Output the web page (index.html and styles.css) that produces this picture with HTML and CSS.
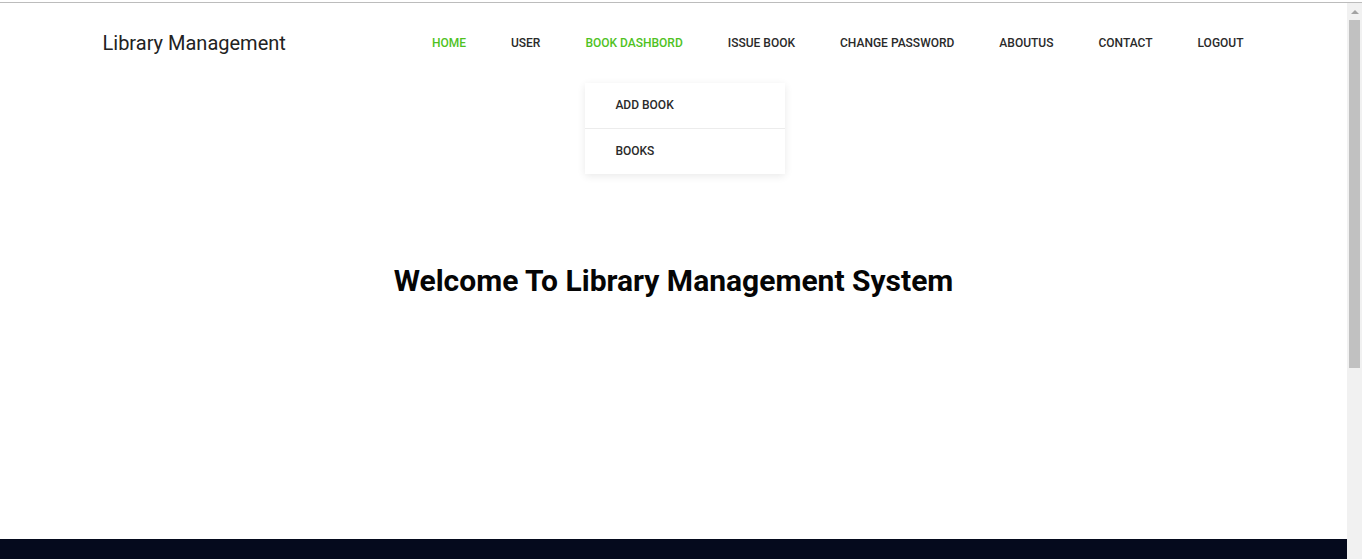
FILE: index.html
```html
<!DOCTYPE html>
<html lang="en">
<head>
<meta charset="utf-8">
<title>Library Management</title>
<link rel="stylesheet" href="styles.css">
</head>
<body>
<div class="topline"></div>
<div class="frame">
  <div class="page">
    <header class="header">
      <div class="container header-inner">
        <a class="logo" href="#">Library Management</a>
        <nav>
          <ul class="menu">
            <li class="active"><a href="#">HOME</a></li>
            <li><a href="#">USER</a></li>
            <li class="active has-drop"><a href="#">BOOK DASHBORD</a>
              <ul class="dropdown">
                <li><a href="#">ADD BOOK</a></li>
                <li><a href="#">BOOKS</a></li>
              </ul>
            </li>
            <li><a href="#">ISSUE BOOK</a></li>
            <li><a href="#">CHANGE PASSWORD</a></li>
            <li><a href="#">ABOUTUS</a></li>
            <li><a href="#">CONTACT</a></li>
            <li><a href="#">LOGOUT</a></li>
          </ul>
        </nav>
      </div>
    </header>
    <section class="hero">
      <h1>Welcome To Library Management System</h1>
    </section>
    <footer class="footer"></footer>
  </div>
  <div class="scrollbar">
    <div class="sb-btn"><span class="sb-arrow"></span></div>
    <div class="sb-thumb"></div>
  </div>
</div>
</body>
</html>
```

FILE: styles.css
```css
* { box-sizing: border-box; }
html, body { margin: 0; padding: 0; height: 100%; overflow: hidden; }
body {
  font-family: Roboto, "Noto Sans", "Liberation Sans", sans-serif;
  background: #fff;
  color: #1c1c1c;
}
a { text-decoration: none; color: inherit; }
ul { list-style: none; margin: 0; padding: 0; }

.topline {
  height: 3px;
  border-bottom: 1px solid #bcbcbc;
  background: #fff;
}
.frame {
  display: flex;
  height: 556px;
}
.page {
  flex: 1;
  display: flex;
  flex-direction: column;
  overflow: hidden;
}
.container {
  width: 1170px;
  padding: 0 15px;
  margin: 0 auto;
}
.header { height: 80px; position: relative; z-index: 5; }
.header-inner {
  height: 100%;
  display: flex;
  align-items: center;
  justify-content: space-between;
}
.logo {
  font-size: 20px;
  color: #222;
  padding-bottom: 1px;
  margin-left: -1px;
}
nav { height: 100%; }
.menu {
  display: flex;
  height: 100%;
  gap: 45px;
}
.menu > li {
  position: relative;
  display: flex;
  align-items: center;
}
.menu > li > a {
  font-size: 12px;
  font-weight: 500;
  color: #2a2a2a;
}
.menu > li.active > a { color: #4fc21f; }

.dropdown {
  position: absolute;
  top: 100%;
  left: 0;
  width: 200px;
  background: #fff;
  box-shadow: 0 2px 8px rgba(0, 0, 0, 0.09);
}
.dropdown li + li { border-top: 1px solid #ececec; }
.dropdown a {
  display: flex;
  align-items: center;
  height: 45px;
  padding-left: 30px;
  padding-bottom: 2px;
  font-size: 12px;
  font-weight: 500;
  color: #2a2a2a;
}

.hero {
  flex: 1;
  text-align: center;
  padding-top: 180px;
}
.hero h1 {
  margin: 0;
  font-size: 30px;
  line-height: 36px;
  font-weight: 700;
  color: #050505;
}
.footer {
  flex: 0 0 20px;
  background: #050a1d;
}

.scrollbar {
  width: 15px;
  background: #f1f1f1;
  display: flex;
  flex-direction: column;
  align-items: center;
}
.sb-btn {
  height: 17px;
  width: 15px;
  display: flex;
  justify-content: center;
  padding-top: 7px;
}
.sb-arrow {
  width: 0;
  height: 0;
  border-left: 4px solid transparent;
  border-right: 4px solid transparent;
  border-bottom: 4px solid #a3a3a3;
}
.sb-thumb {
  width: 11px;
  height: 348px;
  background: #c1c1c1;
}
```
